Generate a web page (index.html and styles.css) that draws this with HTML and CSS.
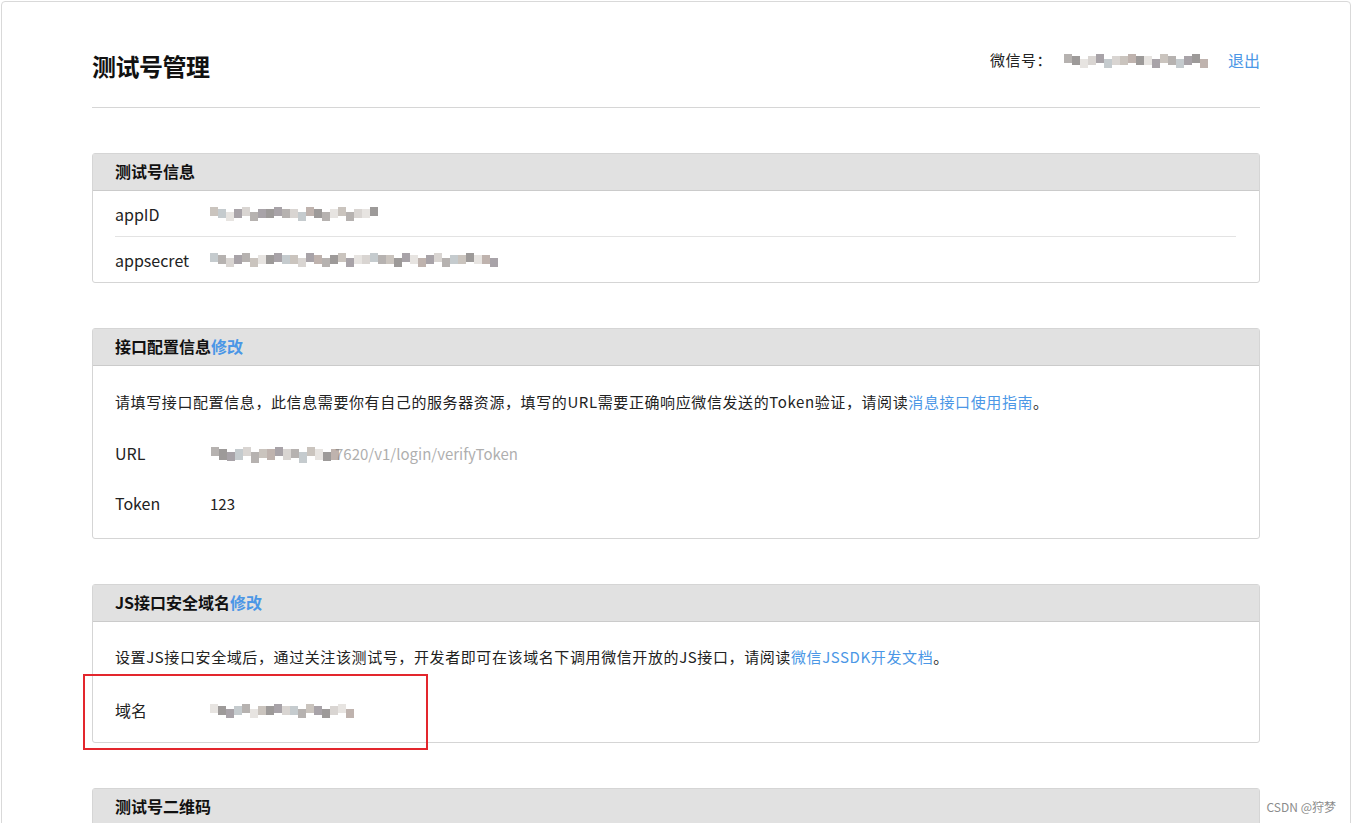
FILE: index.html
```html
<!DOCTYPE html>
<html lang="zh-CN">
<head>
<meta charset="utf-8">
<title>测试号管理</title>
<link rel="stylesheet" href="styles.css">
</head>
<body>
<div class="frame">
  <div class="container">
    <header class="page-header">
      <h1 class="title">测试号管理</h1>
      <div class="account">
        <span class="account-label">微信号：</span>
        <span class="mosaic m-account">
          <i class="c1"></i><i class="c5"></i><i class="c7"></i><i class="c4"></i><i class="c2"></i><i class="c6"></i><i class="c4"></i><i class="c3"></i><i class="c8"></i><i class="c5"></i><i class="c7"></i><i class="c2"></i><i class="c3"></i><i class="c1"></i><i class="c6"></i><i class="c2"></i><i class="c5"></i><i class="c8"></i>
        </span>
        <a class="link logout" href="#">退出</a>
      </div>
    </header>

    <main class="main">
      <section class="panel">
        <div class="panel-hd">测试号信息</div>
        <div class="panel-bd info-bd">
          <div class="info-row">
            <span class="label">appID</span>
            <span class="mosaic">
              <i class="c3"></i><i class="c6"></i><i class="c7"></i><i class="c2"></i><i class="c4"></i><i class="c1"></i><i class="c2"></i><i class="c5"></i><i class="c2"></i><i class="c1"></i><i class="c4"></i><i class="c6"></i><i class="c8"></i><i class="c5"></i><i class="c1"></i><i class="c7"></i><i class="c3"></i><i class="c1"></i><i class="c4"></i><i class="c7"></i><i class="c5"></i>
            </span>
          </div>
          <div class="info-row">
            <span class="label">appsecret</span>
            <span class="mosaic">
              <i class="c6"></i><i class="c1"></i><i class="c4"></i><i class="c2"></i><i class="c1"></i><i class="c3"></i><i class="c7"></i><i class="c5"></i><i class="c2"></i><i class="c6"></i><i class="c3"></i><i class="c4"></i><i class="c2"></i><i class="c8"></i><i class="c1"></i><i class="c5"></i><i class="c3"></i><i class="c2"></i><i class="c7"></i><i class="c4"></i><i class="c6"></i><i class="c1"></i><i class="c3"></i><i class="c5"></i><i class="c2"></i><i class="c7"></i><i class="c8"></i><i class="c2"></i><i class="c4"></i><i class="c1"></i><i class="c6"></i><i class="c3"></i><i class="c5"></i><i class="c7"></i><i class="c8"></i><i class="c2"></i>
            </span>
          </div>
        </div>
      </section>

      <section class="panel">
        <div class="panel-hd">接口配置信息<a class="link" href="#">修改</a></div>
        <div class="panel-bd cfg-bd">
          <p class="intro">请填写接口配置信息，此信息需要你有自己的服务器资源，填写的URL需要正确响应微信发送的Token验证，请阅读<a class="link" href="#">消息接口使用指南</a>。</p>
          <div class="kv-row">
            <span class="label">URL</span>
            <span class="url-value">
              <span class="mosaic m-url">
                <i class="c1"></i><i class="c5"></i><i class="c2"></i><i class="c6"></i><i class="c4"></i><i class="c1"></i><i class="c3"></i><i class="c8"></i><i class="c2"></i><i class="c4"></i><i class="c1"></i><i class="c6"></i><i class="c3"></i><i class="c7"></i><i class="c5"></i><i class="c8"></i>
              </span><span class="faded">7620/v1/login/verifyToken</span>
            </span>
          </div>
          <div class="kv-row">
            <span class="label">Token</span>
            <span class="value">123</span>
          </div>
        </div>
      </section>

      <section class="panel">
        <div class="panel-hd">JS接口安全域名<a class="link" href="#">修改</a></div>
        <div class="panel-bd js-bd">
          <p class="intro">设置JS接口安全域后，通过关注该测试号，开发者即可在该域名下调用微信开放的JS接口，请阅读<a class="link" href="#">微信JSSDK开发文档</a>。</p>
          <div class="kv-row domain-row">
            <span class="label">域名</span>
            <span class="mosaic">
              <i class="c7"></i><i class="c5"></i><i class="c2"></i><i class="c6"></i><i class="c1"></i><i class="c7"></i><i class="c3"></i><i class="c5"></i><i class="c2"></i><i class="c4"></i><i class="c6"></i><i class="c1"></i><i class="c3"></i><i class="c2"></i><i class="c5"></i><i class="c4"></i><i class="c7"></i><i class="c8"></i>
            </span>
          </div>
        </div>
      </section>

      <section class="panel">
        <div class="panel-hd">测试号二维码</div>
        <div class="panel-bd qr-bd"></div>
      </section>
    </main>
  </div>
</div>
<div class="annotation"></div>
<div class="watermark">CSDN @狩梦</div>
</body>
</html>
```

FILE: styles.css
```css
html, body {
  margin: 0;
  padding: 0;
  background: #fff;
}
body {
  font-family: "Noto Sans CJK SC", "Noto Sans", "Liberation Sans", sans-serif;
  color: #222;
  font-size: 15px;
  overflow: hidden;
  height: 823px;
  position: relative;
}
.frame {
  margin: 1px 0 0 1px;
  width: 1348px;
  height: 900px;
  border: 1px solid #d9d9d9;
  border-radius: 4px;
  box-sizing: content-box;
}
.container {
  width: 1168px;
  margin-left: 90px;
}
.page-header {
  height: 105px;
  border-bottom: 1px solid #d6d6d6;
  display: flex;
  justify-content: space-between;
  align-items: flex-start;
}
.title {
  margin: 47px 0 0;
  font-size: 24px;
  line-height: 34px;
  font-weight: 700;
  color: #111;
  letter-spacing: -0.5px;
}
.account {
  margin-top: 42px;
  line-height: 32px;
  display: flex;
  align-items: center;
  font-size: 15px;
  color: #222;
}
.account-label {
  margin-right: 12px;
  letter-spacing: 0.5px;
}
.m-account {
  margin-right: 20px;
}
.link {
  color: #4b97e6;
  text-decoration: none;
}
.logout {
  font-size: 16px;
}
.main {
  padding-top: 45px;
}
.panel {
  border: 1px solid #d5d5d5;
  border-radius: 3px;
  margin-bottom: 45px;
}
.panel-hd {
  background: #e1e1e1;
  height: 36px;
  line-height: 35px;
  padding: 0 22px;
  border-bottom: 1px solid #cbcbcb;
  font-size: 16px;
  font-weight: 700;
  color: #111;
}
.info-bd {
  padding: 0 23px 0 22px;
}
.info-row {
  height: 45px;
  display: flex;
  align-items: center;
}
.info-row + .info-row {
  border-top: 1px solid #e3e3e3;
}
.label {
  width: 95px;
  flex: none;
  font-size: 16px;
  color: #222;
}
.cfg-bd {
  padding: 11px 22px 11px;
}
.cfg-bd .kv-row {
  transform: translateY(1px);
}
.js-bd {
  padding: 10px 22px 7px;
}
.intro {
  margin: 0;
  line-height: 50px;
  font-size: 15px;
  letter-spacing: 0.6px;
  color: #222;
}
.kv-row {
  height: 50px;
  display: flex;
  align-items: center;
}
.domain-row {
  margin-top: 3px;
}
.value {
  font-size: 15px;
}
.url-value {
  display: flex;
  align-items: center;
  margin-left: 1px;
}
.faded {
  color: #7a7a7a;
  font-size: 15px;
  margin-left: -4px;
  opacity: 0.6;
}
.mosaic {
  display: inline-flex;
  height: 9px;
}
.mosaic i {
  display: block;
  width: 8px;
  height: 9px;
}
.mosaic i:nth-child(3n) {
  transform: translateY(3px);
}
.mosaic i:nth-child(4n+1) {
  transform: translateY(-2px);
}
.m-url i:nth-child(2n) {
  height: 11px;
}
.c1 { background: #b6b2b0; }
.c2 { background: #a8a3a8; }
.c3 { background: #cac4be; }
.c4 { background: #d9d5d2; }
.c5 { background: #9d9a99; }
.c6 { background: #c5cbce; }
.c7 { background: #e7e4e1; }
.c8 { background: #bfb3ae; }
.qr-bd {
  height: 60px;
}
.annotation {
  position: absolute;
  left: 83px;
  top: 674px;
  width: 341px;
  height: 72px;
  border: 2px solid #e3262d;
}
.watermark {
  position: absolute;
  right: 15px;
  top: 798px;
  font-size: 12px;
  line-height: 18px;
  color: #8c8c8c;
}
```
